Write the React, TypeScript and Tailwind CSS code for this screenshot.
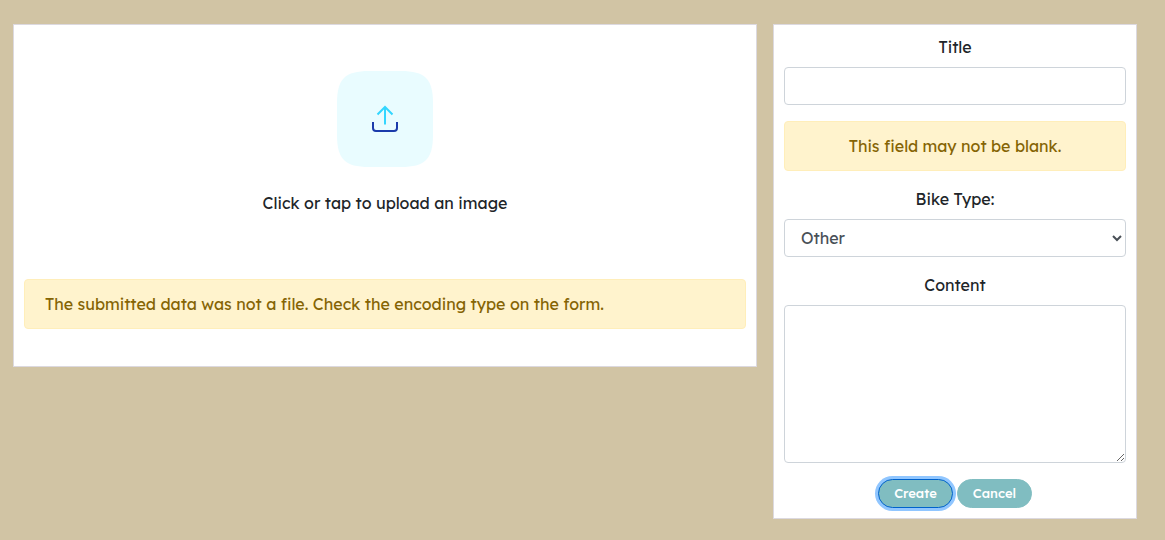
import type { ReactNode } from "react";

const fieldClass =
  "block w-full rounded border border-[#ced4da] bg-white text-base leading-6 text-[#495057] outline-none";

function Warning({ children, className = "" }: { children: ReactNode; className?: string }) {
  return (
    <div
      role="alert"
      className={`rounded border border-[#ffeeba] bg-[#fff3cd] px-5 py-3 text-[#856404] ${className}`}
    >
      {children}
    </div>
  );
}

function UploadIcon() {
  return (
    <svg className="size-24" viewBox="0 0 96 96" fill="none" aria-hidden="true">
      <path
        d="M0 32C0 8 8 0 32 0H64C88 0 96 8 96 32V64C96 88 88 96 64 96H32C8 96 0 88 0 64Z"
        fill="#e9fcff"
      />
      <path d="M48 53.500V36M40.500 43.500L48 36L55.500 43.500" stroke="#33d6ff" strokeWidth="2" />
      <path d="M36 51V57Q36 60 39 60H57Q60 60 60 57V51" stroke="#1b3bab" strokeWidth="2" />
    </svg>
  );
}

export default function App() {
  return (
    <main className="min-h-screen bg-[#d1c4a4] pt-6 pr-5 pb-5 pl-[5px] font-['Lexend_Deca','Inter',sans-serif] text-base leading-6 text-[#212529]">
      <form className="flex items-start" onSubmit={(event) => event.preventDefault()}>
        <div className="w-2/3 px-2">
          <section className="border border-[#dcd9df] bg-white px-2.5 pt-[46px] pb-[37px]">
            <label htmlFor="image-upload" className="mb-16 flex cursor-pointer flex-col items-center gap-6">
              <UploadIcon />
              <span>Click or tap to upload an image</span>
            </label>
            <input id="image-upload" type="file" accept="image/*" className="sr-only" />
            <Warning>The submitted data was not a file. Check the encoding type on the form.</Warning>
          </section>
        </div>
        <div className="w-1/3 px-2">
          <section className="border border-[#dcd9df] bg-white p-2.5 text-center">
            <div className="mb-4">
              <label htmlFor="title" className="mb-2 block">Title</label>
              <input id="title" type="text" className={`${fieldClass} h-[38px] px-3`} />
            </div>
            <Warning className="mb-4">This field may not be blank.</Warning>
            <div className="mb-4">
              <label htmlFor="bike-type" className="mb-2 block">Bike Type:</label>
              <select id="bike-type" defaultValue="other" className={`${fieldClass} h-[38px] px-3`}>
                <option value="other">Other</option>
              </select>
            </div>
            <div className="mb-4">
              <label htmlFor="content" className="mb-2 block">Content</label>
              <textarea id="content" className={`${fieldClass} h-[158px] resize-y px-3 py-1.5`} />
            </div>
            <div className="flex justify-center gap-1 text-[13px] leading-[21px] font-medium text-white">
              <button
                type="submit"
                className="w-[75px] rounded-full border border-[#0062cc] bg-[#80bdc1] py-[3px] ring-3 ring-[#90c6ff]"
              >
                Create
              </button>
              <button type="button" className="w-[75px] rounded-full border border-[#80bdc1] bg-[#80bdc1] py-[3px]">
                Cancel
              </button>
            </div>
          </section>
        </div>
      </form>
    </main>
  );
}
